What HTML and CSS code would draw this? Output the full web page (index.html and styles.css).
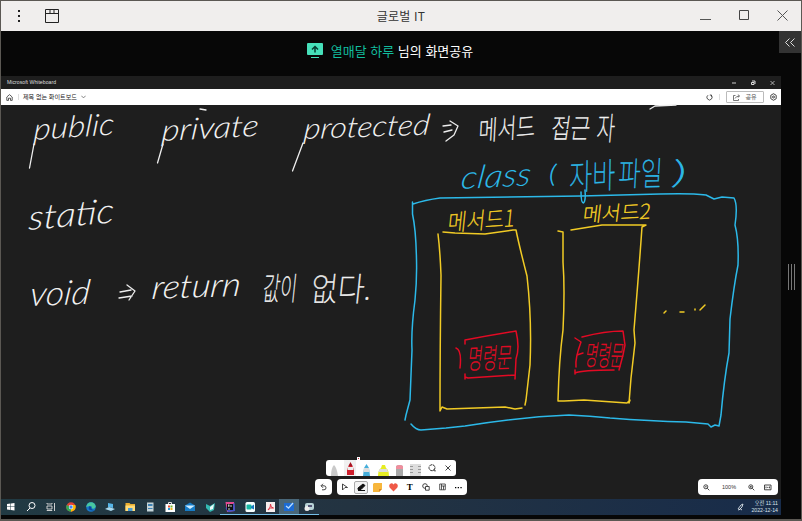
FILE: index.html
```html
<!DOCTYPE html>
<html lang="ko">
<head>
<meta charset="utf-8">
<title>글로벌 IT</title>
<link rel="stylesheet" href="styles.css">
</head>
<body>
<div class="window">
  <header class="titlebar">
    <div class="title-left">
      <svg width="4" height="14"><path d="M1 1h2v2H1zM1 6h2v2H1zM1 11h2v2H1z" fill="#222"/></svg>
      <svg width="14" height="14" fill="none" stroke="#222"><path d="M.5.5h13v13H.5zM.5 4.5h13M5 1v3M9 1v3"/></svg>
    </div>
    <h1>글로벌 IT</h1>
    <div class="title-right">
      <svg width="12" height="12" fill="none" stroke="#555"><path d="M0 10.5h11"/></svg>
      <svg width="11" height="11" fill="none" stroke="#444"><path d="M.5.5h9v9h-9z"/></svg>
      <svg width="11" height="11" fill="none" stroke="#555"><path d="M.5.5l10 10M10.500.5l-10 10"/></svg>
    </div>
  </header>
  <main class="stage">
    <div class="share">
      <svg width="16" height="15"><path d="M1 0h14q1 0 1 1v10q0 1-1 1H1q-1 0-1-1V1q0-1 1-1z" fill="#46e0ba"/><path d="M4 14.500h8" stroke="#46e0ba"/><path d="M8 9.500V4M5 6.500l3-3 3 3" fill="none" stroke="#073c31" stroke-width="1.500"/></svg>
      <p><span class="name">열매달 하루</span> 님의 화면공유</p>
    </div>
    <button class="collapse"><svg width="10" height="9" fill="none" stroke="#ddd"><path d="M4.500.5l-4 4 4 4M9.500.5l-4 4 4 4"/></svg></button>
    <div class="middle">
      <section class="screen">
        <div class="app-title"><span>Microsoft Whiteboard</span>
          <div class="app-controls">
            <svg width="5" height="6"><path d="M0 3h4" stroke="#ccc"/></svg>
            <svg width="5" height="6" fill="none" stroke="#ddd"><path d="M1 1h3v3M.5 2.500h2.500v2h-2.500z"/></svg>
            <svg width="5" height="6" fill="none" stroke="#ccc" stroke-width=".8"><path d="M.5 1l4 4M4.500 1l-4 4"/></svg>
          </div>
        </div>
        <div class="app-bar">
          <svg width="7" height="7" fill="none" stroke="#333" stroke-width=".8"><path d="M.8 3L3.500.6 6.200 3v3.400H4.500V4.200h-2v2.200H.8z"/></svg>
          <i class="rule"></i>
          <span class="doc">제목 없는 화이트보드</span>
          <svg class="chev" width="5" height="4" fill="none" stroke="#666" stroke-width=".8"><path d="M.3.700l2.200 2.200L4.700.7"/></svg>
          <div class="bar-right">
            <svg width="7" height="7" fill="none" stroke="#333" stroke-width=".8"><path d="M2 1.200a2.600 2.600 0 1 0 3 0M3.800 1h1.700v1.700"/></svg>
            <i class="rule"></i>
            <span class="share-btn"><svg width="7" height="7" fill="none" stroke="#555" stroke-width=".8"><path d="M2.500 1.500H.5v5h5V5M2 4.500Q3 2 6.500 2M4.800.5L6.500 2 4.800 3.500"/></svg>공유</span>
            <svg width="7" height="8" fill="none" stroke="#333" stroke-width=".9"><path d="M3.500.7L6.200 2.300v3.400L3.500 7.300.8 5.700V2.300z"/><circle cx="3.500" cy="4" r="1"/></svg>
          </div>
        </div>
        <div class="canvas">
          <svg class="ink" width="780" height="394" viewBox="1 105 780 394">
            <g class="word white">
              <text class="latin" font-size="30" textLength="81" lengthAdjust="spacingAndGlyphs" transform="translate(33 140) rotate(-4) skewX(-8)">public</text>
              <text class="latin" font-size="30" textLength="97" lengthAdjust="spacingAndGlyphs" transform="translate(161 141) rotate(-3) skewX(-8)">private</text>
              <text class="latin" font-size="29" textLength="126" lengthAdjust="spacingAndGlyphs" transform="translate(303 139) rotate(-2) skewX(-8)">protected</text>
              <text class="latin" font-size="34" textLength="86" lengthAdjust="spacingAndGlyphs" transform="translate(28 230) rotate(-5) skewX(-8)">static</text>
              <text class="latin" font-size="34" textLength="60" lengthAdjust="spacingAndGlyphs" transform="translate(29 306) rotate(-2) skewX(-8)">void</text>
              <text class="latin" font-size="33" textLength="89" lengthAdjust="spacingAndGlyphs" transform="translate(151 299) rotate(-2) skewX(-8)">return</text>
              <text font-size="27" textLength="57" lengthAdjust="spacingAndGlyphs" transform="translate(478 141) rotate(-5) skewX(-8)">메서드</text>
              <text font-size="27" textLength="39" lengthAdjust="spacingAndGlyphs" transform="translate(550 138) skewX(-8)">접근</text>
              <text font-size="32" textLength="18" lengthAdjust="spacingAndGlyphs" transform="translate(596 140) skewX(-5)">자</text>
              <text font-size="32" textLength="34" lengthAdjust="spacingAndGlyphs" transform="translate(262 300) skewX(-6)">값이</text>
              <text font-size="33" textLength="60" lengthAdjust="spacingAndGlyphs" transform="translate(310 301) skewX(-6)">없다.</text>
            </g>
            <g class="word blue">
              <text class="latin" font-size="32" textLength="70" lengthAdjust="spacingAndGlyphs" transform="translate(460 189) rotate(-3) skewX(-10)">class</text>
              <text font-size="22" textLength="8" lengthAdjust="spacingAndGlyphs" transform="translate(547 183) skewX(-8)">(</text>
              <text font-size="35" textLength="46" lengthAdjust="spacingAndGlyphs" transform="translate(569 190) rotate(-3) skewX(-4)">자바</text>
              <text font-size="33" textLength="44" lengthAdjust="spacingAndGlyphs" transform="translate(618 186) rotate(-1) skewX(-4)">파일</text>
              <text font-size="28" textLength="16" lengthAdjust="spacingAndGlyphs" transform="translate(671 184) skewX(-8)">)</text>
            </g>
            <g class="word yellow">
              <text font-size="23" textLength="67" lengthAdjust="spacingAndGlyphs" transform="translate(447 231) rotate(-4) skewX(-10)">메서드1</text>
              <text font-size="20" textLength="68" lengthAdjust="spacingAndGlyphs" transform="translate(582 222) rotate(-3) skewX(-10)">메서드2</text>
            </g>
            <g class="word red">
              <text font-size="28" textLength="44" lengthAdjust="spacingAndGlyphs" transform="translate(467 369) rotate(-2) skewX(-8)">명령문</text>
              <text font-size="28" textLength="38" lengthAdjust="spacingAndGlyphs" transform="translate(584 365) rotate(1) skewX(-8)">명령문</text>
            </g>
            <g class="stroke white">
              <path d="M34 144L29.500 168M163 144L157.500 163M303 143L292.500 171"/>
              <path d="M120 292l11-2M119 298l13-2M127 285l8 6-6 9"/>
              <path d="M443 126l8-1M444 132l8-2M450 121l8 5-4 9-8 6"/>
              <path d="M650 109l5-3 21-1M200 109l6 1"/>
            </g>
            <g class="stroke blue">
              <path d="M412.500 202V214Q416 230 416.500 260Q417 280 415 300Q411 330 412 350L410 400 406 415 405 420M411 424Q416 430 421 430L446 428 465 426Q520 417 569 415Q590 416 610 418Q650 421 686 422L708 424 711 427 715 425 719 426 721 415Q724 380 729 353L730 319Q734 285 738 265Q739 240 735 225Q738 205 734 198L722 197 714 199 706 195Q690 193 660 194L581 196 440 198Q425 200 413 204"/>
              <path d="M581 192Q581 203 583.500 203Q586 201 585 190"/>
            </g>
            <g class="stroke yellow">
              <path d="M438 234Q440 250 441 275Q440 350 440 411L442 407 447 409 505 407 515 409 522 408M443 232L455 233 485 234 513 230 516 230Q519 245 527 276Q532 320 530 365L526 400 525 405"/>
              <path d="M558 231L563 232V262Q565 290 563 330Q559 360 558 401L564 401 584 400 627 403 630 400 629 403 631 378 635 343 634 330Q639 270 642 227L646 225H602L571 230"/>
              <path d="M664 313l2-2M680 312h4M695 310v-1M700 310l5-5"/>
            </g>
            <g class="stroke red">
              <path d="M456 348Q462 350 460 368M465 344V340Q491 335 516 331Q520 348 516 359L515 379M465 377L468 378 515 375M465 374V379"/>
              <path d="M575 338L581 342Q575 358 576 367M577 355L583 353M582 337Q605 331 623 331L625 345 623 355 619 370M575 373Q582 370 614 370M575 370V374"/>
            </g>
          </svg>
          <div class="tools">
            <i class="cursor-dot"></i>
            <div class="pens">
              <svg width="84" height="16" viewBox="0 0 84 16"><path fill="#f0f0f0" d="M18 0h12v16H18z"/>
                <g fill="#c9c9c9"><path d="M5 16q0-8 3-11 3 3 4 11z"/><path d="M21 10q1-4 3.500-7 2.500 3 3.500 7v5h-7z" fill="#cf1f2d"/><path d="M22.500 6L24.500 2l2 4z" fill="#a51523"/><path d="M22 7h5l.5 3h-6z" fill="#eee"/><path d="M37 16l1-8 2.500-4 2.500 4 1 8z" fill="#45aeda"/><path d="M38 8h5l.5 4h-6z" fill="#ddd"/><path d="M52 16q0-6 3-8l1-3h3l1 3q3 2 3 8z" fill="#e6ed22"/><path d="M53.500 9h7.500l1 3H52.500z" fill="#ddd"/><path d="M70 7q0-2 3.500-2T77 7v9h-7z" fill="#aaa"/><path d="M70 7q0-2 3.500-2T77 7v2h-7z" fill="#f08e9d"/></g></svg>
              <svg width="11" height="16"><path fill="#ddd" d="M0 4h11v12H0z"/><path stroke="#999" d="M0 6.500h3M8 6.500h3M0 9.500h3M8 9.500h3M0 12.500h3M8 12.500h3"/></svg>
              <svg class="lasso" width="8" height="8" fill="none" stroke="#333"><circle cx="4" cy="3.700" r="3" stroke-dasharray="3 .6"/><path d="M5 6h2v1.500"/></svg>
              <svg class="x" width="6" height="6" stroke="#333" stroke-width=".9"><path d="M.5.5l5 5M5.500.5l-5 5"/></svg>
            </div>
            <div class="tool-row">
              <div class="pill undo"><svg width="7" height="8" fill="none" stroke="#333" stroke-width=".9"><path d="M3 .8L1 2.800l2 2M1.300 2.800H4a2 2 0 0 1 0 4H2"/></svg></div>
              <div class="pill main-tools">
                <span><svg width="8" height="8" fill="none" stroke="#333" stroke-width=".9"><path d="M1.500 1l5 3.500H4L1.500 7z"/></svg></span>
                <span class="active"><svg width="9" height="9"><path d="M1 5l5-4 2 1.500L4 6.500H1zM1 7.500h7" stroke="#111" fill="#111"/></svg></span>
                <span><svg width="9" height="9"><path fill="#f7b63c" d="M1 0h8v6L6 9H0V1z"/><path fill="#d98522" d="M9 6H6v3z"/></svg></span>
                <span><svg width="9" height="9"><path fill="#ef5947" d="M4.500 8.500L.8 4.800Q-.5 2.500 1 1q2-1.500 3.500.5Q6-.5 8 1q1.500 1.500.2 3.800z"/></svg></span>
                <span class="t">T</span>
                <span><svg width="8" height="8" fill="none" stroke="#333" stroke-width=".9"><circle cx="3" cy="3" r="2.300"/><path d="M3.500 3.500h3.700v3.700H3.500z" fill="#fff"/></svg></span>
                <span><svg width="7" height="8" fill="none" stroke="#333" stroke-width=".8"><path d="M.7 1h5.600v5.800H.7zM2.500 1v5.800M2.500 3h3.800M4.500 3v3.800"/></svg></span>
                <span><svg width="7" height="3"><path d="M0 1h1.300v1.300H0zM2.700 1H4v1.300H2.700zM5.400 1h1.300v1.300H5.400z"/></svg></span>
              </div>
            </div>
          </div>
          <div class="zoombar">
            <svg width="7" height="7" fill="none" stroke="#333" stroke-width=".9"><circle cx="2.800" cy="2.800" r="2"/><path d="M4.300 4.300l2 2M2 2.800h1.700"/></svg>
            <span>100%</span>
            <svg class="plus" width="7" height="7" fill="none" stroke="#333" stroke-width=".9"><circle cx="2.800" cy="2.800" r="2"/><path d="M4.300 4.300l2 2M2 2.800h1.700M2.800 2v1.700"/></svg>
            <svg width="8" height="7" fill="none" stroke="#333" stroke-width=".9"><path d="M.5 1h6.500v4.800H.5zM2 2.500v1.800M5.500 2.500v1.800M3.200 3.400h1.200"/></svg>
          </div>
        </div>
        <footer class="taskbar">
          <div class="tasks">
            <span><svg viewBox="0 0 12 12"><path fill="#fff" d="M2 3l3.500-.5v3H2zM6 2.500L9.500 2v3.500H6zM2 6h3.500v3L2 8.500zM6 6h3.500v3.500L6 9z"/></svg></span>
            <span><svg viewBox="0 0 12 12" fill="none" stroke="#fff"><circle cx="7" cy="4.500" r="3"/><path d="M5 7L2 10"/></svg></span>
            <span><svg viewBox="0 0 12 12" fill="none" stroke="#ddd" stroke-width=".9"><path d="M2 2v1h5V2M2 5h5v3H2zM2 10V9.500h5v.5M9.500 2v8M9 5.500h1"/></svg></span>
            <span><svg viewBox="0 0 12 12"><circle cx="6" cy="6" r="4.700" fill="#e24335"/><path d="M1.500 4L6 6v4.700Q0 10 1.500 4" fill="#34a853"/><path d="M6 4h4.300Q12 9 6 10.700" fill="#fbbc05"/><circle cx="6" cy="6" r="2.200" fill="#fff"/><circle cx="6" cy="6" r="1.700" fill="#4285f4"/></svg></span>
            <span><svg viewBox="0 0 12 12"><circle cx="6" cy="6" r="4.800" fill="#1877c9"/><path d="M1.200 6Q2 1.200 6 1.200t4.800 4.500Q9 9 6.500 7 8 3.500 1.200 6" fill="#48c7a0"/><path d="M4.500 5q-3 5 5 4.500-4-1-3-3" fill="#0c4b99"/></svg></span>
            <span><svg viewBox="0 0 12 12"><path fill="#56b6e8" d="M4 2l5 1v4L4 6z"/><path fill="#a9d9ef" d="M1 8l4-2 6 2-4 2z"/></svg></span>
            <span><svg viewBox="0 0 12 12"><path fill="#e9ae30" d="M1.500 2h4l1 1H11v7H1.500z"/><path fill="#ffdc78" d="M1.500 4.500H11V10H1.500z"/><path fill="#4b9cd3" d="M4 7h4.500v3H4z"/></svg></span>
            <span><svg viewBox="0 0 12 12"><path fill="#c4d4d9" d="M3 1.500h6.500v9H3z"/><path fill="#3d82b4" d="M4 3h4.500v2H4zM4 7h4.500v1H4z"/></svg></span>
            <span><svg viewBox="0 0 12 12"><path fill="#fff" d="M1.500 3h9.500v8H1.500z"/><path stroke="#ddd" fill="none" d="M4.500 3V1.500h3V3"/><path fill="#e65035" d="M4 4.500h2v2H4z"/><path fill="#73b530" d="M6.500 4.500h2v2h-2z"/><path fill="#2799da" d="M4 7h2v2H4z"/><path fill="#edb51e" d="M6.500 7h2v2h-2z"/></svg></span>
            <span><svg viewBox="0 0 12 12"><path fill="#167cc7" d="M1 4.500l5-3 5 3V10H1z"/><path fill="#ceecff" d="M1 4.500h10L6 8z"/></svg></span>
            <span><svg viewBox="0 0 12 12"><path fill="#34b9b2" d="M2 3l4 2 5-3-1 7-4 2-4-4z"/><path fill="#e9fbfa" d="M6 6l4-3-1 5-3 1z"/></svg></span>
            <span class="run"><svg viewBox="0 0 12 12"><path fill="#e34b91" d="M1.500 1H10l1 9-8 1z"/><path fill="#4054c8" d="M1.500 7l9-5 .5 8-7 1z"/><path fill="#111" d="M3 3h6v6H3z"/><path stroke="#fff" stroke-width=".8" d="M4 4h1.500M4.800 4v2M7 4v2M4 8h2"/></svg></span>
            <span class="run"><svg viewBox="0 0 12 12"><rect x="1.500" y="1" width="9.500" height="10" rx="1.500" fill="#f7ffff"/><rect x="2.500" y="3.500" width="5" height="5" rx="1" fill="#18b8a4"/><path fill="#137bc0" d="M7 5.500l3-2v5L7 7z"/></svg></span>
            <span class="run"><svg viewBox="0 0 12 12"><path fill="#f6eeee" d="M2 1h9v10H2z"/><path fill="none" stroke="#dc3545" d="M4 9q3-3 2.500-6 0 4 3 4-3-1-5.500 2"/></svg></span>
            <span class="run current"><svg viewBox="0 0 12 12"><path fill="#1c6bd3" d="M1 2h10v8H1z"/><path fill="none" stroke="#b7ddff" stroke-width="1.300" d="M3 5l2.500 2L10 2"/></svg></span>
            <span class="run"><svg viewBox="0 0 12 12"><rect x="2" y="2" width="9" height="7" rx="2" fill="#b7d2d6"/><circle cx="4" cy="7.500" r="2.500" fill="#eee"/><path fill="#557" d="M5 4h4v2H5z"/></svg></span>
          </div>
          <div class="tray">
            <svg width="7" height="8" fill="none" stroke="#dce4ea" stroke-width=".9"><path d="M1 6l3-4 2-1-1 3-3 3M1 7q3-2 4 0"/></svg>
            <div class="clock"><span>오전 11:11</span><span>2022-12-14</span></div>
          </div>
        </footer>
      </section>
      <aside class="handle"><i></i><i></i><i></i></aside>
    </div>
  </main>
</div>
</body>
</html>
```
FILE: styles.css
```css
* { box-sizing: border-box; }
body { margin: 0; font-family: "Liberation Sans", "Noto Sans CJK KR", sans-serif; }
svg { display: block; flex: none; }
.window { width: 802px; height: 521px; display: flex; flex-direction: column; border: 1px solid #5b5853; border-bottom-width: 2px; background: #070707; overflow: hidden; }
.titlebar { height: 30px; flex: none; display: grid; grid-template-columns: 1fr auto 1fr; align-items: center; background: #f0eeed; }
.titlebar h1 { margin: 0; font: 400 12px/18px "Noto Sans CJK KR", sans-serif; color: #333; letter-spacing: .2px; }
.title-left { display: flex; align-items: center; gap: 24px; padding-left: 16px; }
.title-right { display: flex; justify-content: flex-end; align-items: center; gap: 27px; padding: 0 13px 2px 0; }
.stage { position: relative; flex: 1; display: flex; flex-direction: column; }
.share { height: 45px; flex: none; display: flex; justify-content: center; align-items: center; gap: 8px; padding-bottom: 6px; padding-right: 22px; color: #fff; }
.share p { margin: 0; font: 400 13px/20px "Noto Sans CJK KR", sans-serif; letter-spacing: 0; }
.share .name { color: #12bd9e; }
.collapse { position: absolute; top: 0; right: 0; width: 22px; height: 22px; padding: 0; border: 0; display: flex; align-items: center; justify-content: center; background: #333; }
.middle { display: flex; height: 439px; }
.screen { width: 780px; display: flex; flex-direction: column; background: #1e1e1e; }
.app-title { height: 13px; display: flex; align-items: center; justify-content: space-between; padding: 0 6px; color: #ddd; font: 5.2px/13px "Liberation Sans", sans-serif; }
.app-controls { display: flex; gap: 14px; }
.app-bar { height: 16px; display: flex; align-items: center; padding: 0 4px 0 5px; background: #fff; color: #222; font: 6.1px/16px "Noto Sans CJK KR", sans-serif; }
.rule { width: 1px; height: 6px; background: #ddd; }
.app-bar > .rule { margin: 0 4px 0 5px; }
.chev { margin-left: 4px; }
.bar-right { margin-left: auto; display: flex; align-items: center; gap: 6px; }
.share-btn { display: flex; align-items: center; justify-content: center; gap: 5px; width: 38px; height: 12px; border: 1px solid #bbb; border-radius: 1px; line-height: 10px; color: #555; }
.canvas { position: relative; height: 394px; }
.ink { overflow: visible; }
.word { font-family: "Noto Sans CJK KR", sans-serif; font-weight: 100; stroke-width: .5; }
.word .latin { font-family: Lato, sans-serif; font-weight: 300; font-style: italic; stroke: none; }
.word.white { fill: #f2f2f2; stroke: #f2f2f2; }
.word.blue { fill: #2cb9e9; stroke: #2cb9e9; }
.word.yellow { fill: #f1cb25; stroke: #f1cb25; }
.word.red { fill: #e30a24; stroke: #e30a24; }
.stroke { fill: none; stroke-width: 1.3; stroke-linecap: round; stroke-linejoin: round; }
.stroke.white { stroke: #eee; }
.stroke.blue { stroke: #2cb9e9; stroke-width: 1.5; }
.stroke.yellow { stroke: #f1cb25; stroke-width: 1.5; }
.stroke.red { stroke: #e30a24; stroke-width: 1.5; }
.tools { position: absolute; left: 314px; top: 355px; display: flex; flex-direction: column; gap: 3px; }
.cursor-dot { position: absolute; left: 42px; top: -3px; width: 3px; height: 3px; border: 1px solid #fff; background: #c23; }
.pens { display: flex; align-items: center; width: 130px; height: 16px; margin-left: 11px; border-radius: 3px; background: #fff; overflow: hidden; }
.lasso { margin-left: 7px; }
.x { margin-left: 9px; }
.tool-row { display: flex; gap: 5px; }
.pill { height: 16px; display: flex; align-items: center; justify-content: center; background: #fff; border-radius: 4px; }
.undo { width: 17px; }
.main-tools { width: 130px; justify-content: flex-start; }
.main-tools span { width: 16.2px; height: 13px; display: flex; align-items: center; justify-content: center; }
.main-tools .active { width: 14px; margin: 0 1px; height: 13px; border: 1px solid #aaa; border-radius: 2px; background: #f3f3f3; }
.main-tools .t { font: bold 9px/13px "Liberation Serif", serif; }
.zoombar { position: absolute; left: 697px; top: 374px; width: 80px; height: 16px; display: flex; align-items: center; padding: 0 7px 0 5px; border-radius: 4px; background: #fff; color: #333; font-size: 5.5px; }
.zoombar span { margin: 0 12px; }
.zoombar .plus { margin-right: 9px; }
.taskbar { height: 16px; display: flex; justify-content: space-between; background: linear-gradient(90deg, #213a43, #233341 45%, #182c4a); }
.tasks { display: flex; }
.tasks span { width: 19.9px; height: 16px; padding: 2px 4px; }
.tasks svg { width: 12px; height: 12px; }
.tasks .run { border-bottom: 1px solid #75bfe9; }
.tasks .current { background: #496779; }
.tray { display: flex; align-items: center; gap: 7px; padding-right: 3px; color: #dce4ea; }
.clock { display: flex; flex-direction: column; align-items: flex-end; font-size: 5.2px; line-height: 7px; white-space: nowrap; }
.handle { flex: 1; display: flex; justify-content: center; gap: 2px; padding-top: 188px; }
.handle i { width: 1px; height: 26px; background: #777; }
```
